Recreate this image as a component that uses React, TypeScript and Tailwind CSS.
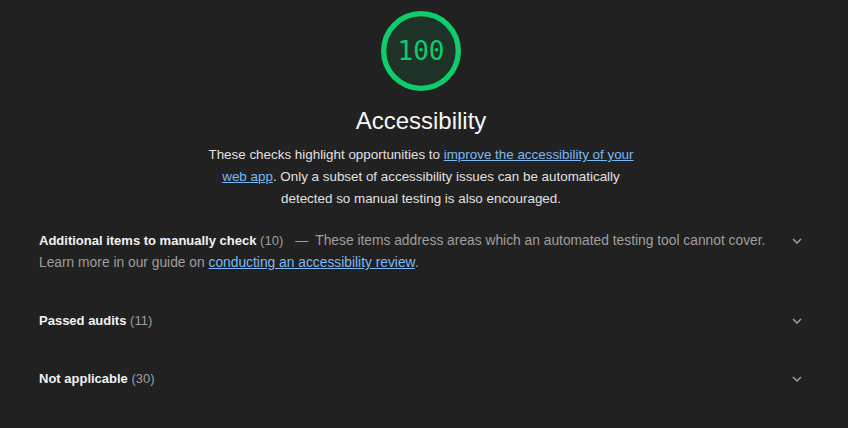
import React from "react";

function Chevron() {
  return (
    <svg width="18" height="18" viewBox="0 0 24 24" className="shrink-0">
      <path d="M7.41 8.59L12 13.17l4.59-4.58L18 10l-6 6-6-6 1.41-1.41z" fill="#9e9e9e" />
    </svg>
  );
}

function Row({ title, count, children }: { title: string; count: string; children?: React.ReactNode }) {
  return (
    <div className="flex items-start pl-[39px] pr-[42px] py-[18px]">
      <div className="flex-1 pr-[22px] text-[13px] leading-[22px] text-[#9e9e9e]">
        <span className="font-bold text-[#f1f1f1]">{title}</span>
        <span> ({count})</span>
        {children}
      </div>
      <div className="h-[22px] flex items-center">
        <Chevron />
      </div>
    </div>
  );
}

export default function App() {
  return (
    <div className="min-h-screen w-full bg-[#212121] font-['Liberation_Sans',Arial,sans-serif]">
      <div className="flex flex-col items-center pt-[11px] pr-[6px]">
        <div className="relative w-[80px] h-[80px]">
          <svg width="80" height="80" viewBox="0 0 120 120" className="absolute inset-0">
            <circle cx="60" cy="60" r="56" fill="rgba(12,206,107,0.1)" stroke="#0cce6b" strokeWidth="8" />
          </svg>
          <div className="absolute inset-0 flex items-center justify-center font-['DejaVu_Sans_Mono',monospace] text-[26px] text-[#0cce6b]">
            100
          </div>
        </div>
        <div className="mt-[14px] text-[24px] leading-[32px] text-[#f5f5f5]">Accessibility</div>
        <p className="mt-[7px] w-[434px] text-center text-[13.4px] leading-[22px] text-[#e0e0e0]">
          These checks highlight opportunities to{" "}
          <a className="text-[#7cb9f3] underline">improve the accessibility of your web app</a>. Only a subset of
          accessibility issues can be automatically detected so manual testing is also encouraged.
        </p>
      </div>
      <div className="mt-[2px]">
        <Row title="Additional items to manually check" count="10">
          <span className="ml-[12px]">—</span>
          <span className="ml-[7px] text-[13.8px]">
            These items address areas which an automated testing tool cannot cover. Learn more in our guide on{" "}
            <a className="text-[#7cb9f3] underline">conducting an accessibility review</a>.
          </span>
        </Row>
        <Row title="Passed audits" count="11" />
        <Row title="Not applicable" count="30" />
      </div>
    </div>
  );
}
